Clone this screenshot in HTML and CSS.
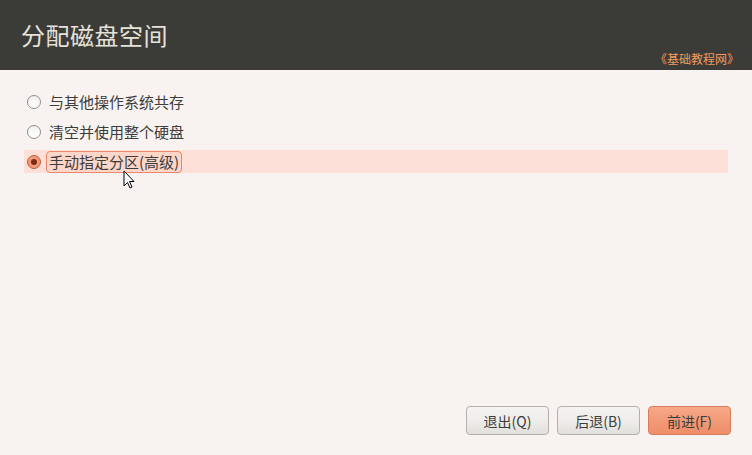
FILE: index.html
```html
<!DOCTYPE html>
<html>
<head>
    <title>分配磁盘空间</title>
    <link rel="stylesheet" href="styles.css">
</head>
<body>
    <div class="header">
        <h1>分配磁盘空间</h1>
        <span class="site">《基础教程网》</span>
    </div>
    <div class="content">
        <div class="option">
            <span class="radio"></span>
            <span class="label">与其他操作系统共存</span>
        </div>
        <div class="option">
            <span class="radio"></span>
            <span class="label">清空并使用整个硬盘</span>
        </div>
        <div class="option selected">
            <span class="radio checked"></span>
            <span class="label focus">手动指定分区(高级)</span>
            <svg class="cursor" width="14" height="20" viewBox="0 0 14 20">
                <path d="M1 1 L1 16 L4.5 12.5 L7 18 L9 17 L6.5 11.5 L11 11.5 Z" fill="#fff" stroke="#000" stroke-width="1" stroke-linejoin="round"/>
            </svg>
        </div>
    </div>
    <div class="buttons">
        <button class="btn">退出(Q)</button>
        <button class="btn">后退(B)</button>
        <button class="btn primary">前进(F)</button>
    </div>
</body>
</html>
```

FILE: styles.css
```css
html, body {
    margin: 0;
    padding: 0;
}
body {
    width: 752px;
    height: 455px;
    background-color: #f8f3f0;
    font-family: "Noto Sans CJK SC", "Open Sans", sans-serif;
    display: flex;
    flex-direction: column;
    overflow: hidden;
}
.header {
    height: 70px;
    background-color: #3b3c38;
    position: relative;
    box-sizing: border-box;
    padding: 17px 0 0 21px;
}
.header h1 {
    margin: 0;
    font-size: 24px;
    font-weight: normal;
    color: #e6e2da;
    line-height: 36px;
    letter-spacing: 0.5px;
}
.site {
    position: absolute;
    right: 13px;
    top: 50px;
    font-size: 12px;
    line-height: 18px;
    color: #f29b5e;
}
.content {
    padding: 20px 24px 0 24px;
    flex: 1;
}
.option {
    display: flex;
    align-items: center;
    height: 23px;
    margin-bottom: 7px;
    padding-left: 3px;
    font-size: 15px;
    color: #3c3c3c;
    position: relative;
}
.option.selected {
    background-color: #fde1d8;
}
.radio {
    width: 12px;
    height: 12px;
    border: 1px solid #8f8d89;
    border-radius: 50%;
    background: linear-gradient(#f4f2f0, #ffffff);
    margin-right: 5px;
    flex-shrink: 0;
    position: relative;
}
.radio.checked {
    border-color: #b85e3b;
    background: #f29a79;
}
.radio.checked::after {
    content: "";
    position: absolute;
    left: 3px;
    top: 3px;
    width: 6px;
    height: 6px;
    border-radius: 50%;
    background: #7a2e14;
}
.label {
    line-height: 20px;
    padding: 0 2px;
    border: 1px solid transparent;
    border-radius: 4px;
}
.label.focus {
    border-color: #e8876a;
    background-color: #fcd6c8;
}
.cursor {
    position: absolute;
    left: 99px;
    top: 20px;
}
.buttons {
    display: flex;
    justify-content: flex-end;
    gap: 8px;
    padding: 0 21px 20px 0;
}
.btn {
    width: 83px;
    height: 29px;
    border: 1px solid #b4b1ac;
    border-radius: 4px;
    background: linear-gradient(#f5f3f1 0%, #efedea 50%, #e2e0dc 100%);
    font-family: "Noto Sans CJK SC", "Open Sans", sans-serif;
    font-size: 14px;
    color: #3c3c3c;
    padding: 0;
}
.btn.primary {
    border-color: #d57d5d;
    background: linear-gradient(#f8a888 0%, #f29a77 50%, #ee8e68 100%);
}
```
